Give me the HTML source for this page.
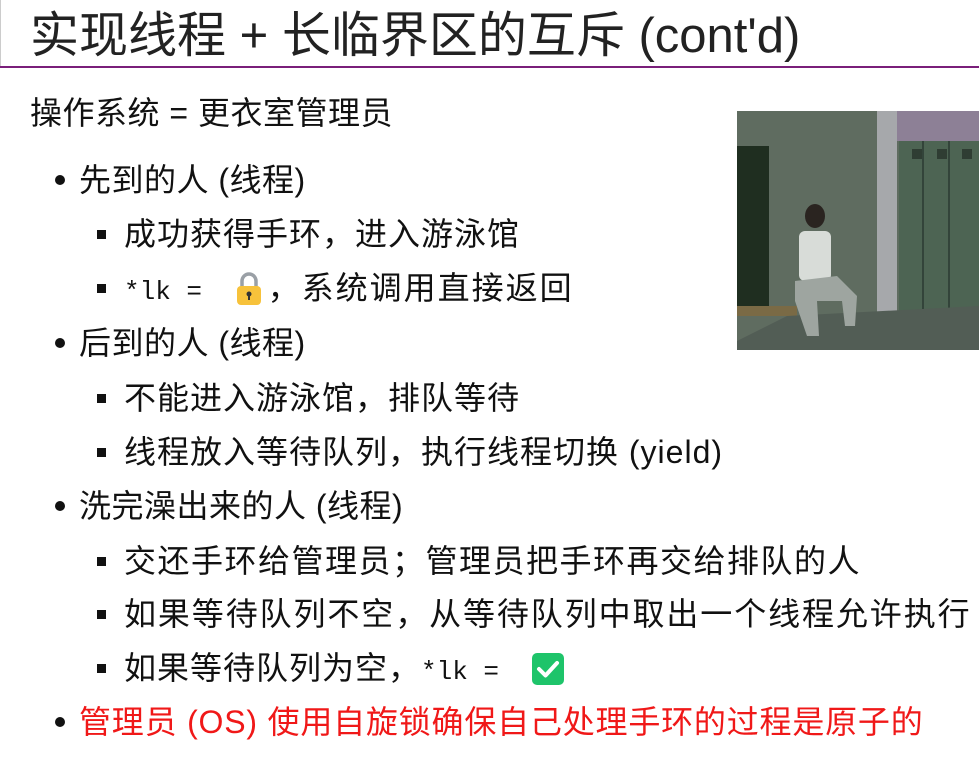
<!DOCTYPE html>
<html><head><meta charset="utf-8"><style>
body{margin:0;width:979px;height:759px;background:#fff;overflow:hidden;position:relative;font-family:"Liberation Sans","Noto Sans CJK SC",sans-serif;color:#111}
.t{position:absolute;left:30px;top:1px;font-size:49px;letter-spacing:0;white-space:nowrap;color:#222;line-height:70px}
.hr{position:absolute;left:0;top:66px;width:979px;height:2px;background:#7a1f7a}
.vl{position:absolute;left:0;top:0;width:1px;height:68px;background:#ccc}
.l{position:absolute;white-space:nowrap;font-size:32px;letter-spacing:2px;line-height:40px}
.b1::before{content:"";position:absolute;left:-24px;top:15px;width:10px;height:10px;border-radius:50%;background:#111}
.b2::before{content:"";position:absolute;left:-27px;top:16px;width:9px;height:9px;background:#111}
.m{font-family:"Liberation Mono",monospace;font-size:26px;letter-spacing:0}
.img{position:absolute;left:737px;top:111px;width:242px;height:239px}
</style></head><body>
<div class="vl"></div>
<div class="t">实现线程 + 长临界区的互斥 (cont'd)</div>
<div class="hr"></div>
<div class="l" style="left:30px;top:93px;letter-spacing:0.5px">操作系统 = 更衣室管理员</div>
<div class="img">
<svg width="242" height="239" viewBox="0 0 242 239">
<rect x="0" y="0" width="242" height="239" fill="#5f6c60"/>
<rect x="0" y="35" width="32" height="170" fill="#1f2e20"/>
<rect x="140" y="0" width="20" height="205" fill="#a6a8ab"/>
<rect x="160" y="0" width="82" height="30" fill="#8d8096"/>
<rect x="162" y="30" width="80" height="180" fill="#4d6453"/>
<rect x="175" y="38" width="10" height="10" fill="#2f3d33"/><rect x="200" y="38" width="10" height="10" fill="#2f3d33"/><rect x="225" y="38" width="10" height="10" fill="#2f3d33"/>
<line x1="186" y1="30" x2="186" y2="210" stroke="#33443a" stroke-width="2"/><line x1="212" y1="30" x2="212" y2="210" stroke="#33443a" stroke-width="2"/>
<rect x="0" y="195" width="60" height="10" fill="#7a6a45"/>
<path d="M0 230 L50 205 L242 195 L242 239 L0 239Z" fill="#525d55"/>
<ellipse cx="78" cy="105" rx="10" ry="12" fill="#2a2420"/>
<rect x="62" y="120" width="32" height="50" rx="6" fill="#d8dcd8"/>
<path d="M58 170 L100 165 L120 185 L118 215 L108 215 L105 190 L80 190 L82 225 L70 225 L58 190Z" fill="#9ea5a0"/>
</svg></div>
<div class="l b1" style="left:79px;top:160px;letter-spacing:0.5px">先到的人 (线程)</div>
<div class="l b2" style="left:124px;top:214px;letter-spacing:1px">成功获得手环，进入游泳馆</div>
<div class="l b2" style="left:124px;top:268px"><span class="m">*lk = </span><svg width="30" height="36" viewBox="0 0 30 36" style="vertical-align:-8px;margin:0 4px 0 16px"><path d="M8 16 V10 a7 7 0 0 1 14 0 V16" fill="none" stroke="#9aa0a6" stroke-width="3.5"/><rect x="3" y="15" width="24" height="19" rx="4" fill="#f7c23b"/><circle cx="15" cy="23" r="2.5" fill="#333"/><rect x="14" y="23" width="2" height="6" fill="#333"/></svg>，系统调用直接返回</div>
<div class="l b1" style="left:79px;top:323px;letter-spacing:0.5px">后到的人 (线程)</div>
<div class="l b2" style="left:124px;top:378px;letter-spacing:1px">不能进入游泳馆，排队等待</div>
<div class="l b2" style="left:124px;top:432px;letter-spacing:1px">线程放入等待队列，执行线程切换 (yield)</div>
<div class="l b1" style="left:79px;top:486px;letter-spacing:0.5px">洗完澡出来的人 (线程)</div>
<div class="l b2" style="left:124px;top:541px;letter-spacing:1.5px">交还手环给管理员；管理员把手环再交给排队的人</div>
<div class="l b2" style="left:124px;top:594px;letter-spacing:1.9px">如果等待队列不空，从等待队列中取出一个线程允许执行</div>
<div class="l b2" style="left:124px;top:648px;letter-spacing:1px">如果等待队列为空，<span class="m">*lk = </span><svg width="34" height="34" viewBox="0 0 34 34" style="vertical-align:-7px;margin-left:16px"><rect x="1" y="1" width="32" height="32" rx="5" fill="#1ec46a"/><path d="M8 17 L14.5 23.5 L26 11" fill="none" stroke="#fff" stroke-width="4" stroke-linecap="round" stroke-linejoin="round"/></svg></div>
<div class="l b1" style="left:79px;top:702px;color:#f01818;letter-spacing:0.8px">管理员 (OS) 使用自旋锁确保自己处理手环的过程是原子的</div>
</body></html>
